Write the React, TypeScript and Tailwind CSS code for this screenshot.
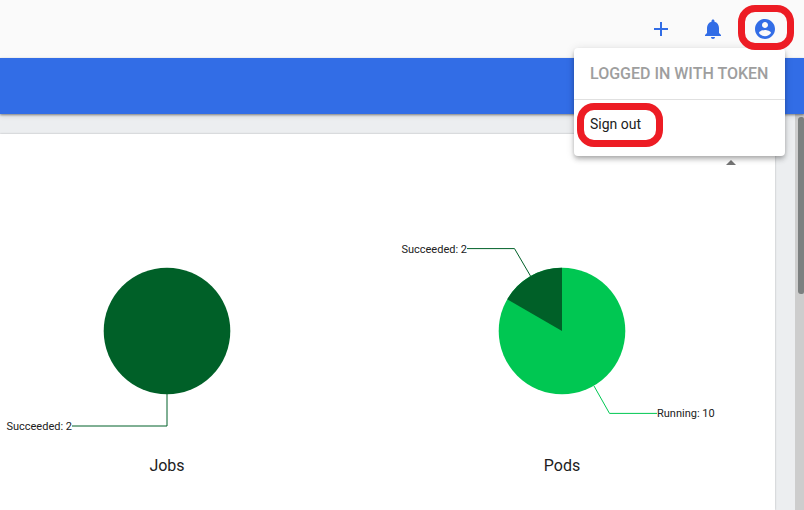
import type { ReactNode } from "react";

function IconButton({ label, children }: { label: string; children: ReactNode }) {
  return (
    <button aria-label={label} className="flex h-10 w-10 items-center justify-center text-[#326de6]">
      <svg viewBox="0 0 24 24" className="h-6 w-6 fill-current">
        {children}
      </svg>
    </button>
  );
}

function Header() {
  return (
    <header className="flex h-[58px] shrink-0 items-center justify-end gap-3 bg-[#fafafa] pr-[19px]">
      <IconButton label="Create">
        <path d="M19 13h-6v6h-2v-6H5v-2h6V5h2v6h6v2z" />
      </IconButton>
      <IconButton label="Notifications">
        <path d="M12 22c1.1 0 2-.9 2-2h-4c0 1.1.89 2 2 2zm6-6v-5c0-3.07-1.64-5.64-4.5-6.32V4c0-.83-.67-1.5-1.5-1.5s-1.5.67-1.5 1.5v.68C7.63 5.36 6 7.92 6 11v5l-2 2v1h16v-1l-2-2z" />
      </IconButton>
      <IconButton label="Account">
        <path d="M12 2C6.48 2 2 6.48 2 12s4.48 10 10 10 10-4.48 10-10S17.52 2 12 2zm0 3c1.66 0 3 1.34 3 3s-1.34 3-3 3-3-1.34-3-3 1.34-3 3-3zm0 14.2c-2.5 0-4.71-1.28-6-3.22.03-1.99 4-3.08 6-3.08 1.99 0 5.97 1.09 6 3.08-1.29 1.94-3.5 3.22-6 3.22z" />
      </IconButton>
    </header>
  );
}

function JobsChart() {
  return (
    <figure className="flex w-[334px] flex-col items-center">
      <svg width="334" height="200" viewBox="0 240 334 200">
        <circle cx="167" cy="331" r="63.3" fill="#006028" />
        <path d="M167 394V426H72" fill="none" stroke="#006028" />
        <text x="72" y="430" textAnchor="end" className="fill-[#212121] text-[11px]">
          Succeeded: 2
        </text>
      </svg>
      <figcaption className="mt-[14px] text-base leading-6">Jobs</figcaption>
    </figure>
  );
}

function PodsChart() {
  return (
    <figure className="flex w-[396px] flex-col items-center">
      <svg width="396" height="200" viewBox="364 240 396 200">
        <circle cx="562" cy="331" r="63.3" fill="#00c752" />
        <path d="M562 331L507.2 299.35A63.3 63.3 0 0 1 562 267.7Z" fill="#006028" />
        <path d="M530.5 276L514.5 248.6H467" fill="none" stroke="#006028" />
        <path d="M594 386L609.5 413.4H657" fill="none" stroke="#00c752" />
        <text x="467" y="253" textAnchor="end" className="fill-[#212121] text-[11px]">
          Succeeded: 2
        </text>
        <text x="657" y="417" className="fill-[#212121] text-[11px]">
          Running: 10
        </text>
      </svg>
      <figcaption className="mt-[14px] text-base leading-6">Pods</figcaption>
    </figure>
  );
}

function AccountMenu() {
  return (
    <div className="absolute top-12 left-[574px] z-10 h-[108px] w-[211px] rounded bg-white shadow-[0_2px_4px_-1px_rgba(0,0,0,.2),0_4px_5px_rgba(0,0,0,.14),0_1px_10px_rgba(0,0,0,.12)]">
      <div className="flex h-[52px] items-center border-b border-[#e0e0e0] pl-4 text-base font-medium whitespace-nowrap text-[#9e9e9e]">
        LOGGED IN WITH TOKEN
      </div>
      <button className="flex h-12 items-center pl-4 text-sm">Sign out</button>
    </div>
  );
}

export default function App() {
  return (
    <div className="relative flex h-[510px] w-[804px] flex-col overflow-hidden bg-[#eceef0] font-[Roboto,sans-serif] text-[#212121]">
      <Header />
      <div className="z-[1] h-14 shrink-0 bg-[#326de6] shadow-[0_1px_2px_rgba(0,0,0,.4),0_2px_5px_rgba(0,0,0,.12)]" />
      <div className="flex min-h-0 flex-1 justify-between">
        <main className="mt-5 w-[775px] bg-white shadow-[0_0_2px_rgba(0,0,0,.25)]">
          <div className="flex h-[106px] justify-end pt-[26px] pr-[39px]">
            <svg width="10" height="5" viewBox="0 0 10 5" className="fill-[#757575]">
              <path d="M0 5L5 0L10 5Z" />
            </svg>
          </div>
          <div className="flex gap-[30px]">
            <JobsChart />
            <PodsChart />
          </div>
        </main>
        <div className="flex w-[9px] justify-end bg-[#cdcdcd] pt-[3px]">
          <div className="h-[177px] w-[6px] rounded-l-[3px] rounded-r-[2px] bg-[#7c8080]" />
        </div>
      </div>
      <AccountMenu />
      <div className="absolute top-[5px] left-[738px] z-20 h-[45px] w-14 rounded-[17px] border-[7px] border-[#ed1c24]" />
      <div className="absolute top-[103px] left-[577px] z-20 h-11 w-[86px] rounded-[17px] border-[7px] border-[#ed1c24]" />
    </div>
  );
}
